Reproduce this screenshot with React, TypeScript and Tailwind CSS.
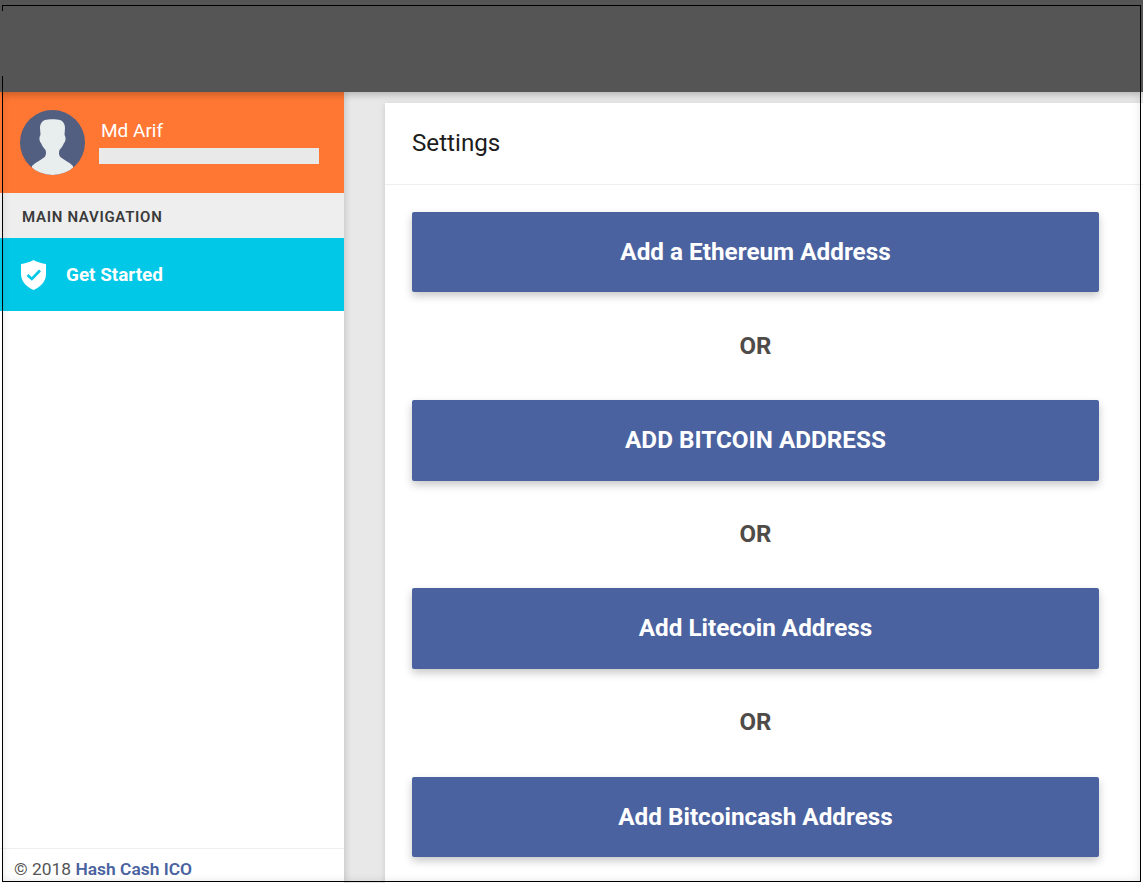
const addressButtons = ["Add a Ethereum Address", "ADD BITCOIN ADDRESS", "Add Litecoin Address", "Add Bitcoincash Address"];

function Avatar() {
  return (
    <svg viewBox="0 0 65 65" className="h-[65px] w-[65px] shrink-0">
      <defs>
        <clipPath id="avatar-clip">
          <circle cx="32.5" cy="32.5" r="32.5" />
        </clipPath>
      </defs>
      <circle cx="32.5" cy="32.5" r="32.5" fill="#535f80" />
      <path
        clipPath="url(#avatar-clip)"
        d="M25 10 C28 9 37 9 40 10 C43 11 45 14 45 18 L44.5 25 C46 27 46 31 44 33 C43 36 41 38 39.5 40 C38.5 43 39 46 41 47.5 C44 50 49 52 53 56 L53 66 L12 66 L12 56 C16 52 21 50 24 47.5 C26 46 26.5 43 25.5 40 C24 38 22 36 21 33 C19 31 19 27 20.5 25 L20 18 C20 14 22 11 25 10 Z"
        fill="#e8edee"
      />
    </svg>
  );
}

function ShieldCheck() {
  return (
    <svg viewBox="0 0 25 30" className="h-[30px] w-[25px] shrink-0">
      <path d="M12.5 0 C16 2 21 3.6 25 4 L25 14 C25 21.5 19.5 27 12.5 30 C5.5 27 0 21.5 0 14 L0 4 C4 3.6 9 2 12.5 0 Z" fill="#ffffff" />
      <path d="M6.5 15 L10.8 19 L19 10.5" fill="none" stroke="#00c8e6" strokeWidth="2.6" />
    </svg>
  );
}

export default function App() {
  return (
    <div className="relative flex h-[883px] w-[1143px] flex-col overflow-hidden bg-[#e8e8e8] font-['Roboto',sans-serif]">
      <header className="z-10 h-[92px] shrink-0 bg-[#555555] shadow-[0_2px_8px_rgba(0,0,0,0.2)]" />

      <div className="flex min-h-0 flex-1">
        <aside className="flex w-[344px] shrink-0 flex-col bg-white shadow-[2px_0_6px_rgba(0,0,0,0.14)]">
          <div className="flex h-[101px] shrink-0 items-center gap-[14px] bg-[#ff7733] pl-[20px]">
            <Avatar />
            <div className="mt-[-3px] flex flex-col">
              <span className="ml-[2px] text-[19px] leading-[24px] text-white">Md Arif</span>
              <div className="mt-[5px] h-[16px] w-[220px] bg-[#e9e9e9]" />
            </div>
          </div>

          <div className="flex h-[45px] shrink-0 items-center bg-[#eeeeee] pl-[22px] pt-[3px] text-[15px] font-semibold tracking-[0.7px] text-[#3a3a3a]">
            MAIN NAVIGATION
          </div>

          <div className="flex h-[73px] shrink-0 items-center gap-[20px] bg-[#00c8e6] pl-[21px] text-[18.9px] font-bold text-white">
            <ShieldCheck />
            <span className="mt-[1px]">Get Started</span>
          </div>

          <div className="flex-1" />

          <footer className="h-[35px] shrink-0 border-t border-[#eeeeee] pl-[14px] pt-[8px] text-[17.4px] leading-[24px] text-[#555555]">
            © 2018 <span className="font-semibold text-[#4a62a0]">Hash Cash ICO</span>
          </footer>
        </aside>

        <main className="min-w-0 flex-1 pl-[41px] pt-[11px]">
          <section className="h-full bg-white shadow-[0_2px_6px_rgba(0,0,0,0.14)]">
            <h1 className="flex h-[82px] items-center border-b border-[#eeeeee] pl-[27px] text-[24.2px] font-normal text-[#1c1c1c]">
              Settings
            </h1>
            <div className="flex w-[714px] flex-col pl-[27px] pt-[27px]">
              {addressButtons.map((label, index) => (
                <div key={label} className="flex flex-col items-center">
                  {index > 0 && (
                    <div className="flex h-[107.8px] items-center pb-[0.6px] text-[24px] font-bold text-[#4f4b48]">OR</div>
                  )}
                  <button
                    type="button"
                    className="h-[80.4px] w-full rounded-[2px] bg-[#4b62a0] text-[24.3px] font-bold text-white shadow-[0_4px_8px_rgba(0,0,0,0.22)]"
                  >
                    {label}
                  </button>
                </div>
              ))}
            </div>
          </section>
        </main>
      </div>

      {/* screenshot crop marks and the faint inner shade they carry */}
      <div className="pointer-events-none absolute inset-x-[3px] bottom-[2px] top-[92px] z-20 shadow-[inset_0_0_8px_rgba(0,0,0,0.1)]" />
      <div className="pointer-events-none absolute left-[2px] right-[2px] top-[5px] z-20 h-px bg-black" />
      <div className="pointer-events-none absolute left-[2px] top-[5px] z-20 h-[6px] w-px bg-black" />
      <div className="pointer-events-none absolute bottom-[1px] left-[2px] top-[76px] z-20 w-px bg-black" />
      <div className="pointer-events-none absolute bottom-[1px] right-[2px] top-[5px] z-20 w-px bg-black" />
      <div className="pointer-events-none absolute bottom-[1px] left-[2px] right-[2px] z-20 h-px bg-black" />
    </div>
  );
}
